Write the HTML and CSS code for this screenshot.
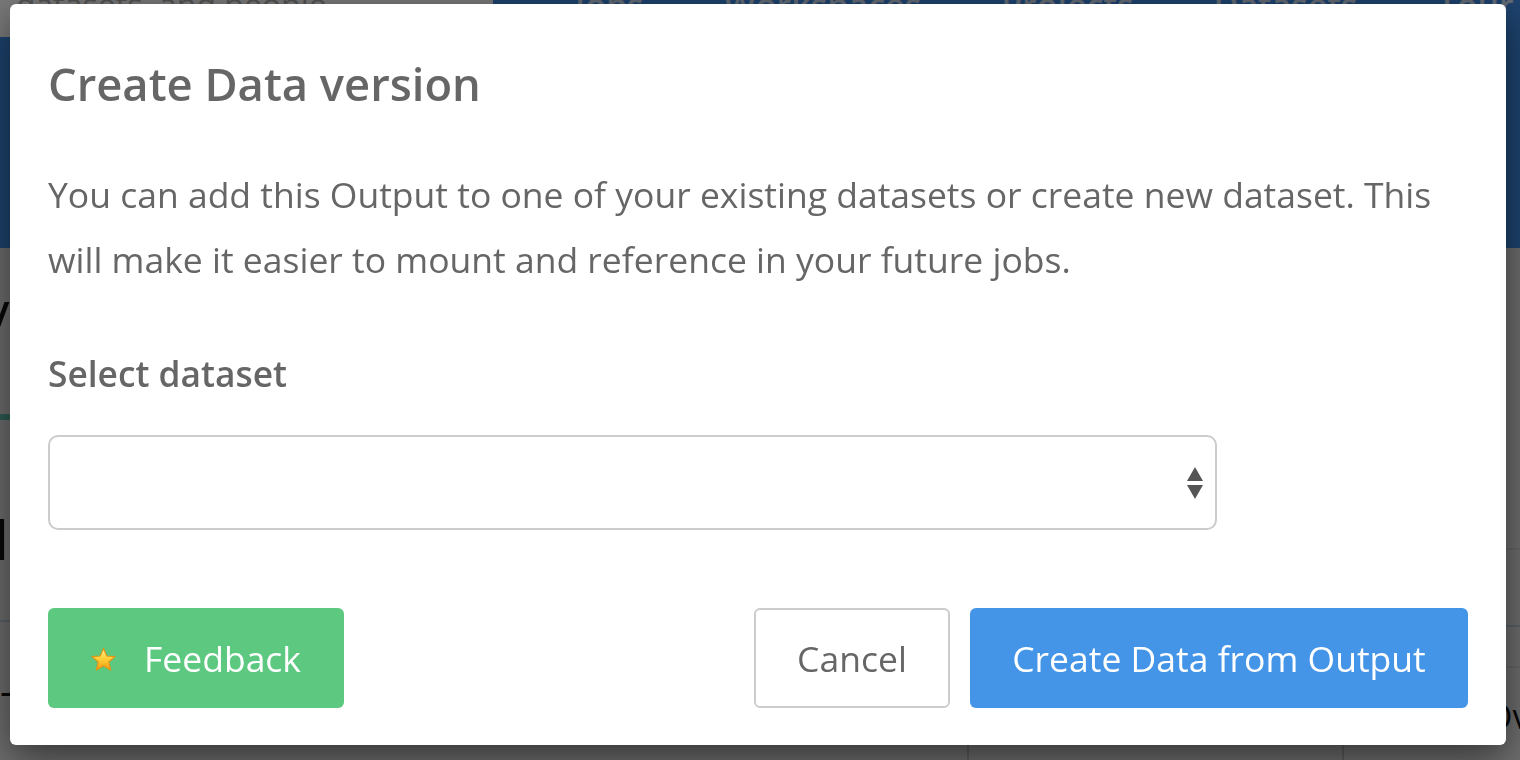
FILE: index.html
```html
<!DOCTYPE html>
<html>
<head>
<meta charset="utf-8">
<link rel="stylesheet" href="styles.css">
</head>
<body>
<div class="page">
  <header class="topbar">
    <div class="search">datasets, and people</div>
    <nav class="nav">
      <span>Jobs</span><span>Workspaces</span><span>Projects</span><span>Datasets</span><span>Tour</span>
    </nav>
  </header>
  <div class="hero"></div>
  <div class="content">
    <div class="left-col">
      <div class="slash">/</div>
      <div class="tealline"></div>
      <div class="bar-i">I</div>
      <div class="rowline"></div>
      <div class="dash">-</div>
    </div>
    <div class="right-col">
      <div class="table-row r1"></div>
      <div class="table-row r2"></div>
      <div class="table-row r3"></div>
      <div class="cells">
        <div class="cell"></div>
        <div class="cell cell-text">Ovr</div>
      </div>
    </div>
  </div>
</div>
<div class="overlay"></div>
<div class="modal">
  <h1 class="modal-title">Create Data version</h1>
  <p class="modal-text">You can add this Output to one of your existing datasets or create new dataset. This will make it easier to mount and reference in your future jobs.</p>
  <label class="field-label">Select dataset</label>
  <div class="select">
    <svg class="select-arrows" width="18" height="34" viewBox="0 0 18 34"><path d="M9 1 L17 15 L1 15 Z" fill="#555"/><path d="M1 19 L17 19 L9 33 Z" fill="#555"/></svg>
  </div>
  <div class="actions">
    <button class="btn btn-feedback">
      <svg class="star" width="27" height="26" viewBox="0 0 24 23">
        <defs>
          <linearGradient id="starGrad" x1="0" y1="0" x2="0" y2="1">
            <stop offset="0" stop-color="#fff3a0"/>
            <stop offset="0.45" stop-color="#ffd23a"/>
            <stop offset="1" stop-color="#f39a12"/>
          </linearGradient>
        </defs>
        <path d="M12 1.2 L14.9 7.9 L22.2 8.5 L16.7 13.3 L18.4 20.5 L12 16.7 L5.6 20.5 L7.3 13.3 L1.8 8.5 L9.1 7.9 Z" fill="url(#starGrad)" stroke="#e39312" stroke-width="1" stroke-linejoin="round"/>
      </svg><span>Feedback</span>
    </button>
    <div class="actions-right">
      <button class="btn btn-cancel">Cancel</button>
      <button class="btn btn-primary">Create Data from Output</button>
    </div>
  </div>
</div>
</body>
</html>
```

FILE: styles.css
```css
html, body {
  margin: 0;
  padding: 0;
  width: 1520px;
  height: 760px;
  overflow: hidden;
  font-family: "Open Sans", "Noto Sans", sans-serif;
}
.page {
  width: 1520px;
  height: 760px;
  overflow: hidden;
  background: #e2e2e2;
  display: flex;
  flex-direction: column;
}
.topbar {
  display: flex;
  align-items: flex-start;
  height: 52px;
  flex: none;
  overflow: hidden;
  background: #3d88e0;
}
.search {
  width: 493px;
  height: 37px;
  flex: none;
  background: #f6f6f6;
  color: #aaa;
  font-size: 32px;
  line-height: 10px;
  padding-left: 16px;
  box-sizing: border-box;
  overflow: hidden;
  white-space: nowrap;
}
.nav {
  flex: 1;
  min-width: 0;
  display: flex;
  gap: 80px;
  padding-left: 82px;
  color: #c8d8ee;
  font-size: 34px;
  font-weight: 600;
  line-height: 10px;
  white-space: nowrap;
  overflow: hidden;
}
.hero {
  height: 196px;
  flex: none;
  background: #3d88e0;
}
.content {
  flex: 1;
  min-height: 0;
  display: flex;
  overflow: hidden;
  background: #dedede;
}
.left-col {
  width: 40px;
  flex: none;
  display: flex;
  flex-direction: column;
}
.slash {
  font-size: 60px;
  color: #111;
  padding-top: 44px;
  line-height: 60px;
  margin-left: -12px;
}
.tealline {
  height: 6px;
  background: #5fb7a8;
  margin-top: 62px;
}
.bar-i {
  font-size: 56px;
  line-height: 56px;
  margin-top: 90px;
  color: #111;
  margin-left: -6px;
}
.rowline {
  height: 2px;
  background: #b8c4d8;
  margin-top: 54px;
}
.dash {
  font-size: 40px;
  color: #111;
  margin-top: 58px;
  line-height: 20px;
}
.right-col {
  flex: 1;
  min-width: 0;
  display: flex;
  flex-direction: column;
}
.table-row {
  height: 2px;
  flex: none;
}
.r1 { margin-top: 300px; background: #cfcfcf; }
.r2 { margin-top: 75px; background: #b8c4d8; }
.r3 { margin-top: 39px; background: #cfcfcf; }
.cells {
  flex: 1;
  display: flex;
  padding-left: 927px;
}
.cell {
  width: 373px;
  flex: none;
  border-left: 2px solid #bbb;
}
.cell-text {
  flex: 1;
  width: auto;
  min-width: 0;
  font-size: 34px;
  color: #111;
  padding-left: 142px;
  padding-top: 20px;
  line-height: 56px;
  overflow: hidden;
  white-space: nowrap;
}
.overlay {
  position: fixed;
  inset: 0;
  background: rgba(0, 0, 0, 0.5);
}
.modal {
  position: absolute;
  left: 10px;
  top: 4px;
  width: 1496px;
  height: 741px;
  box-sizing: border-box;
  background: #fff;
  border-radius: 6px;
  box-shadow: 0 12px 40px rgba(0, 0, 0, 0.55);
  padding: 52px 38px 37px;
  display: flex;
  flex-direction: column;
  color: #666;
}
.modal-title {
  margin: 0;
  font-size: 45.3px;
  line-height: 55px;
  font-weight: 600;
  color: #666;
}
.modal-text {
  margin: 51px 0 0;
  font-size: 35.5px;
  line-height: 65px;
  width: 1410px;
}
.field-label {
  margin-top: 57px;
  font-size: 35.3px;
  font-weight: 600;
  line-height: 48px;
}
.select {
  margin-top: 38px;
  width: 1169px;
  height: 95px;
  box-sizing: border-box;
  border: 2px solid #ccc;
  border-radius: 10px;
  display: flex;
  align-items: center;
  justify-content: flex-end;
  padding-right: 11px;
}
.actions {
  margin-top: auto;
  display: flex;
  justify-content: space-between;
}
.actions-right {
  display: flex;
  gap: 20px;
}
.btn {
  height: 100px;
  border-radius: 6px;
  font-family: inherit;
  font-size: 35.5px;
  border: 0;
  display: flex;
  align-items: center;
  justify-content: center;
  padding: 0 40px;
}
.btn-feedback {
  width: 296px;
  background: #5cc880;
  color: #fff;
  justify-content: flex-start;
  padding-left: 42px;
  padding-right: 0;
  white-space: nowrap;
}
.star {
  flex: none;
  width: 27px;
  height: 26px;
  margin-right: 27px;
  margin-top: 4px;
}
.btn-cancel {
  width: 196px;
  background: #fff;
  border: 2px solid #ccc;
  color: #666;
}
.btn-primary {
  width: 498px;
  background: #4495e8;
  color: #fff;
}
```
